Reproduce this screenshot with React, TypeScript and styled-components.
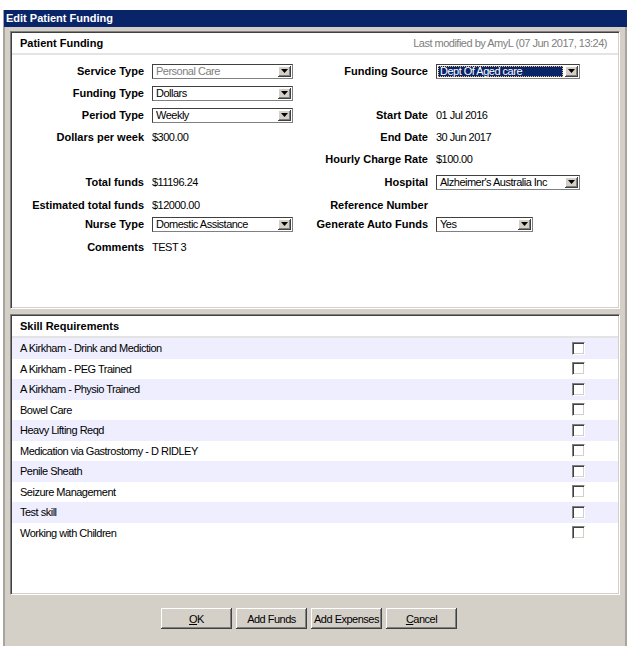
import React from 'react';
import styled, { createGlobalStyle } from 'styled-components';

const GlobalStyle = createGlobalStyle`
  body {
    margin: 0;
    background: #fff;
    font-family: "Liberation Sans", Arial, sans-serif;
    font-size: 11px;
    letter-spacing: -0.5px;
    color: #000;
  }
`;

const Dialog = styled.div`
  margin: 10px 6px 0 3px;
  height: 636px;
  box-sizing: border-box;
  background: #d4d0c8;
  border-left: 2px solid #a8a49c;
  border-right: 2px solid #a8a49c;
  display: flex;
  flex-direction: column;
`;

const TitleBar = styled.div`
  height: 17px;
  line-height: 17px;
  background: #0a246a;
  color: #fff;
  font-weight: bold;
  letter-spacing: 0;
  padding-left: 2px;
  margin: 0 -2px 0 -1px;
`;

const Body = styled.div`
  padding: 4px 5px 0 5px;
  display: flex;
  flex-direction: column;
  gap: 5px;
`;

const Panel = styled.div<{ $h: number }>`
  height: ${({ $h }) => $h}px;
  box-sizing: border-box;
  background: #fff;
  border: 1px solid;
  border-color: #808080 #fff #fff #808080;
  box-shadow: inset 1px 1px #404040, inset -1px -1px #d4d0c8;
  padding: 1px;
  display: flex;
  flex-direction: column;
`;

const PanelHeader = styled.div`
  height: 22px;
  box-sizing: border-box;
  display: flex;
  align-items: center;
  justify-content: space-between;
  padding: 0 11px 1px 8px;
  border-bottom: 2px solid;
  border-image: linear-gradient(#a0a0a0 50%, #e4e4e4 50%) 1;
`;

const PanelTitle = styled.span`
  font-weight: bold;
  letter-spacing: 0;
`;

const Modified = styled.span`
  color: #808080;
`;

const FormGrid = styled.div`
  display: grid;
  grid-template-columns: 132px 140px 128px 1fr;
  grid-template-rows: 22px 22px 22px 22px 22px 24px 21px 18px 28px;
  column-gap: 8px;
  margin-top: 5px;
  align-items: center;
`;

const Label = styled.div`
  font-weight: bold;
  letter-spacing: 0;
  text-align: right;
  white-space: nowrap;
`;

const Value = styled.div`
  white-space: nowrap;
`;

const Combo = styled.div<{ $w: number }>`
  width: ${({ $w }) => $w}px;
  height: 15px;
  box-sizing: border-box;
  display: flex;
  background: #fff;
  border: 1px solid;
  border-color: #404040 #808080 #808080 #404040;
  padding: 1px;
`;

const ComboText = styled.div<{ $disabled?: boolean; $selected?: boolean }>`
  flex: 1;
  line-height: 11px;
  padding-left: 2px;
  white-space: nowrap;
  overflow: hidden;
  color: ${({ $disabled, $selected }) => ($selected ? '#fff' : $disabled ? '#808080' : '#000')};
  background: ${({ $selected }) => ($selected ? '#0a246a' : 'transparent')};
  outline: ${({ $selected }) => ($selected ? '1px dotted #e8c070' : 'none')};
  outline-offset: -1px;
`;

const ComboButton = styled.div`
  width: 13px;
  margin-left: 2px;
  box-sizing: border-box;
  background: #d4d0c8;
  box-shadow: inset -1px -1px #404040, inset 1px 1px #fff, inset -2px -2px #808080;
  display: flex;
  align-items: center;
  justify-content: center;
`;

const SkillRows = styled.div`
  display: flex;
  flex-direction: column;
`;

const SkillRow = styled.div<{ $alt: boolean }>`
  height: 20.5px;
  display: flex;
  align-items: center;
  justify-content: space-between;
  padding: 0 33px 0 8px;
  background: ${({ $alt }) => ($alt ? '#eeeeff' : '#fff')};
`;

const CheckBox = styled.div`
  width: 13px;
  height: 13px;
  box-sizing: border-box;
  background: #fff;
  border: 1px solid;
  border-color: #808080 #fff #fff #808080;
  box-shadow: inset 1px 1px #404040, inset -1px -1px #d4d0c8;
`;

const ButtonBar = styled.div`
  display: flex;
  justify-content: center;
  gap: 4px;
  padding: 13px 12px 0 0;
`;

const Button = styled.button`
  width: 71px;
  height: 21px;
  padding: 0;
  border: none;
  background: #d4d0c8;
  font-family: "Liberation Sans", Arial, sans-serif;
  font-size: 11px;
  letter-spacing: -0.5px;
  color: #000;
  box-shadow: inset -1px -1px #404040, inset 1px 1px #fff, inset -2px -2px #808080, inset 2px 2px #d4d0c8;
`;

const Arrow = () => (
  <svg width="7" height="4" viewBox="0 0 7 4">
    <polygon points="0,0 7,0 3.5,4" fill="#000" />
  </svg>
);

type DropProps = { value: string; width: number; disabled?: boolean; selected?: boolean };

const Dropdown = ({ value, width, disabled, selected }: DropProps) => (
  <Combo $w={width}>
    <ComboText $disabled={disabled} $selected={selected}>{value}</ComboText>
    <ComboButton>
      <Arrow />
    </ComboButton>
  </Combo>
);

const skills = [
  'A Kirkham - Drink and Mediction',
  'A Kirkham - PEG Trained',
  'A Kirkham - Physio Trained',
  'Bowel Care',
  'Heavy Lifting Reqd',
  'Medication via Gastrostomy - D RIDLEY',
  'Penile Sheath',
  'Seizure Management',
  'Test skill',
  'Working with Children',
];

export default function App() {
  return (
    <>
      <GlobalStyle />
      <Dialog>
        <TitleBar>Edit Patient Funding</TitleBar>
        <Body>
          <Panel $h={278}>
            <PanelHeader>
              <PanelTitle>Patient Funding</PanelTitle>
              <Modified>Last modified by AmyL (07 Jun 2017, 13:24)</Modified>
            </PanelHeader>
            <FormGrid>
              <Label>Service Type</Label>
              <Dropdown value="Personal Care" width={141} disabled />
              <Label>Funding Source</Label>
              <Dropdown value="Dept Of Aged care" width={144} selected />

              <Label>Funding Type</Label>
              <Dropdown value="Dollars" width={141} />
              <div />
              <div />

              <Label>Period Type</Label>
              <Dropdown value="Weekly" width={141} />
              <Label>Start Date</Label>
              <Value>01 Jul 2016</Value>

              <Label>Dollars per week</Label>
              <Value>$300.00</Value>
              <Label>End Date</Label>
              <Value>30 Jun 2017</Value>

              <div />
              <div />
              <Label>Hourly Charge Rate</Label>
              <Value>$100.00</Value>

              <Label>Total funds</Label>
              <Value>$11196.24</Value>
              <Label>Hospital</Label>
              <Dropdown value="Alzheimer's Australia Inc" width={144} />

              <Label>Estimated total funds</Label>
              <Value>$12000.00</Value>
              <Label>Reference Number</Label>
              <div />

              <Label>Nurse Type</Label>
              <Dropdown value="Domestic Assistance" width={141} />
              <Label>Generate Auto Funds</Label>
              <Dropdown value="Yes" width={97} />

              <Label>Comments</Label>
              <Value>TEST 3</Value>
              <div />
              <div />
            </FormGrid>
          </Panel>
          <Panel $h={281}>
            <PanelHeader>
              <PanelTitle>Skill Requirements</PanelTitle>
            </PanelHeader>
            <SkillRows>
              {skills.map((s, i) => (
                <SkillRow key={s} $alt={i % 2 === 0}>
                  <span>{s}</span>
                  <CheckBox />
                </SkillRow>
              ))}
            </SkillRows>
          </Panel>
        </Body>
        <ButtonBar>
          <Button><u>O</u>K</Button>
          <Button>Add Funds</Button>
          <Button>Add Expenses</Button>
          <Button><u>C</u>ancel</Button>
        </ButtonBar>
      </Dialog>
    </>
  );
}
